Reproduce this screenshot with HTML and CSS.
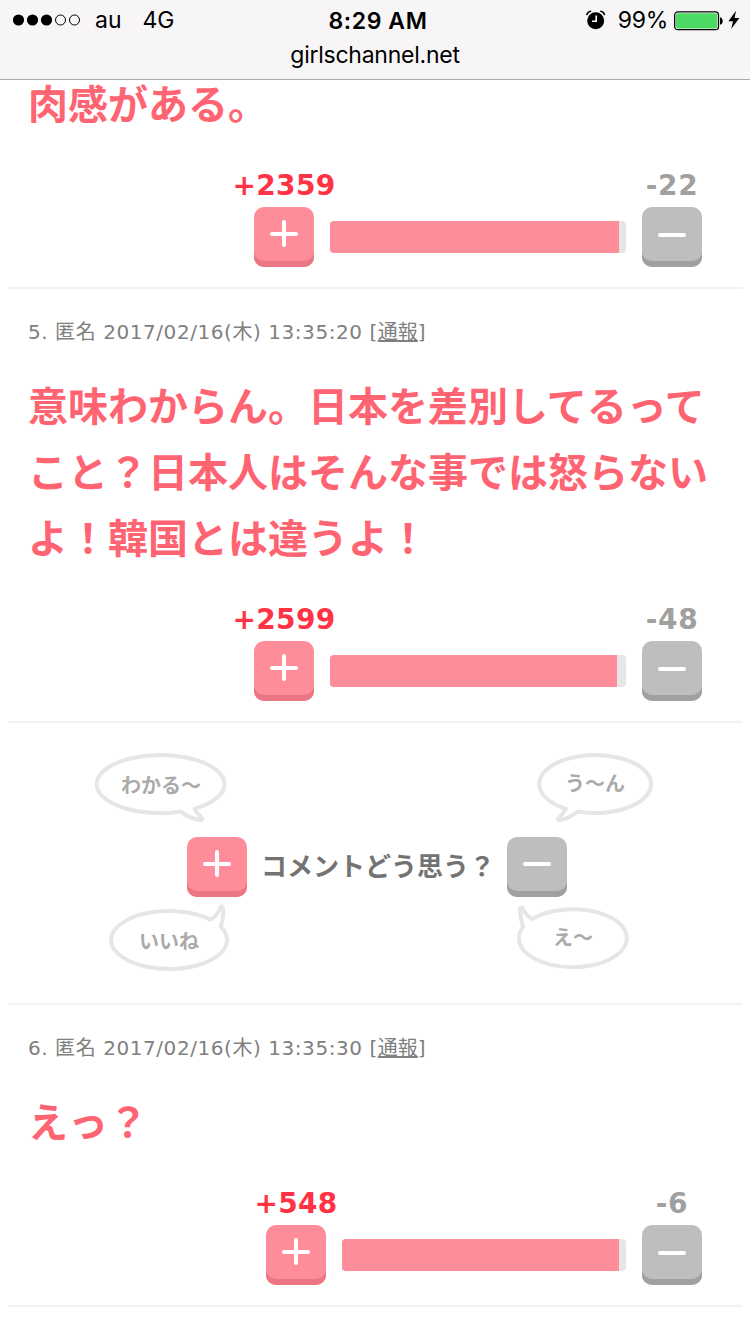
FILE: index.html
```html
<!DOCTYPE html>
<html lang="ja">
<head>
    <meta charset="UTF-8">
    <title>girlschannel.net</title>
    <link rel="stylesheet" href="styles.css">
</head>
<body>
  <div class="header">
    <div class="status">
      <div class="left">
        <svg class="signal" width="68" height="12" viewBox="0 0 68 12">
          <circle cx="5.5" cy="6" r="5.6"/>
          <circle cx="19.5" cy="6" r="5.6"/>
          <circle cx="33.5" cy="6" r="5.6"/>
          <circle class="off" cx="47.5" cy="6" r="5"/>
          <circle class="off" cx="61.5" cy="6" r="5"/>
        </svg>
        <span class="carrier">au</span>
        <span class="network">4G</span>
      </div>
      <div class="time">8:29 AM</div>
      <div class="right">
        <svg class="alarm" width="20" height="20" viewBox="0 0 20 20">
          <circle cx="9.7" cy="10.7" r="8.5"/>
          <path class="bell" d="M0.8 5.2C1.2 3 3 1.4 5.2 1.2M14.2 1.2C16.4 1.4 18.2 3 18.6 5.2"/>
          <path class="hand" d="M10.2 5.6V11.2H6"/>
        </svg>
        <span class="percent">99%</span>
        <svg class="battery" width="50" height="20" viewBox="0 0 50 20">
          <rect class="case" x="0.7" y="0.9" width="43.8" height="17.8" rx="3.2"/>
          <rect class="level" x="2" y="2.2" width="41.2" height="15.2" rx="1.8"/>
          <path d="M46 6.2C49.6 7 49.6 13 46 13.8Z"/>
        </svg>
        <svg class="bolt" width="12" height="20" viewBox="0 0 12 20">
          <path d="M8 0.8L0.4 11.2H5L3.2 19L11.4 8H6.6Z"/>
        </svg>
      </div>
    </div>
    <div class="url">girlschannel.net</div>
  </div>

  <ul class="list">
    <li class="item first">
      <div class="body">肉感がある。</div>
      <div class="vote">
        <div class="col">
          <span class="num plus-num">+2359</span>
          <div class="btn plus"><i></i></div>
        </div>
        <div class="bar"><div class="fill" style="width: 289px"></div></div>
        <div class="col">
          <span class="num minus-num">-22</span>
          <div class="btn minus"><i></i></div>
        </div>
      </div>
    </li>

    <li class="item">
      <div class="info">5. 匿名 2017/02/16(木) 13:35:20 [<a>通報</a>]</div>
      <div class="body">意味わからん。日本を差別してるって<br>こと？日本人はそんな事では怒らない<br>よ！韓国とは違うよ！</div>
      <div class="vote">
        <div class="col">
          <span class="num plus-num">+2599</span>
          <div class="btn plus"><i></i></div>
        </div>
        <div class="bar"><div class="fill" style="width: 287px"></div></div>
        <div class="col">
          <span class="num minus-num">-48</span>
          <div class="btn minus"><i></i></div>
        </div>
      </div>
    </li>

    <li class="guide">
      <div class="bubbles top">
        <svg class="bubble" width="132" height="70" viewBox="0 0 132 70">
          <path d="M99.5 55.7A64 29 0 1 0 86 58.6Q95 66 106 67Q108.500 67 106.500 64.800Q101.500 60 99.5 55.7Z"/>
          <text x="66" y="39.500">わかる〜</text>
        </svg>
        <svg class="bubble" width="116" height="70" viewBox="0 0 116 70">
          <path d="M29 55.8A56 29 0 1 1 40.700 58.6Q31 66 22.500 67Q19.500 67 22 64.800Q26.500 60 29 55.8Z"/>
          <text x="58" y="38">う〜ん</text>
        </svg>
      </div>
      <div class="ask">
        <div class="btn plus"><i></i></div>
        <span>コメントどう思う？</span>
        <div class="btn minus"><i></i></div>
      </div>
      <div class="bubbles bottom">
        <svg class="bubble" width="120" height="67" viewBox="0 0 120 67">
          <path d="M101.3 15.6A58 29 0 1 0 111.7 22.8Q115.500 10 113.800 3.500Q112.600 1 111.400 3.500Q108 12.500 101.3 15.6Z"/>
          <text x="60" y="44.500">いいね</text>
        </svg>
        <svg class="bubble" width="112" height="67" viewBox="0 0 112 67">
          <path d="M15.3 15A54 29 0 1 1 6 23Q2.500 10 3.200 4.500Q4.200 2 5.600 4.500Q10 12.500 15.3 15Z"/>
          <text x="56" y="41">え〜</text>
        </svg>
      </div>
    </li>

    <li class="item">
      <div class="info">6. 匿名 2017/02/16(木) 13:35:30 [<a>通報</a>]</div>
      <div class="body">えっ？</div>
      <div class="vote">
        <div class="col">
          <span class="num plus-num">+548</span>
          <div class="btn plus"><i></i></div>
        </div>
        <div class="bar short"><div class="fill" style="width: 277px"></div></div>
        <div class="col">
          <span class="num minus-num">-6</span>
          <div class="btn minus"><i></i></div>
        </div>
      </div>
    </li>
  </ul>
</body>
</html>
```

FILE: styles.css
```css
* {
  margin: 0;
  padding: 0;
  list-style: none;
  box-sizing: border-box;
}
body {
  width: 750px;
  height: 1334px;
  overflow: hidden;
  background-color: #fff;
  font-family: "DejaVu Sans", "Noto Sans CJK JP", sans-serif;
}

/* status bar */
.header {
  height: 80px;
  background-color: #f7f5f6;
  border-bottom: 1px solid #acaaab;
  font-family: Inter, sans-serif;
  color: #000;
}
.status {
  display: flex;
  height: 40px;
  font-size: 23px;
  line-height: 42px;
}
.left {
  display: flex;
  align-items: center;
  width: 328px;
  padding-left: 13px;
}
.carrier {
  margin-left: 14px;
}
.network {
  margin-left: 21px;
}
.off {
  fill: none;
  stroke: #000;
  stroke-width: 1;
}
.time {
  width: 100px;
  text-align: center;
  font-weight: 600;
  letter-spacing: 0.6px;
  white-space: nowrap;
}
.right {
  flex: 1;
  display: flex;
  align-items: center;
  justify-content: flex-end;
  padding-right: 10px;
}
.alarm {
  margin-right: 12px;
}
.bell,
.hand {
  fill: none;
  stroke: #000;
  stroke-width: 1.6;
}
.hand {
  stroke: #fff;
}
.percent {
  letter-spacing: -0.3px;
}
.battery {
  margin: 1px 0 0 6px;
}
.case {
  fill: #fff;
  stroke: #000;
  stroke-width: 1.3;
}
.level {
  fill: #4cd964;
}
.bolt {
  margin-left: 4px;
}
.url {
  height: 30px;
  line-height: 30px;
  text-align: center;
  font-size: 23px;
  letter-spacing: -0.25px;
}

/* comments */
.list {
  margin: 0 8px;
}
.item {
  padding: 24px 40px 20px 20px;
  border-bottom: 2px solid #f2f2f2;
}
.first {
  padding-top: 0;
}
.first .body {
  margin-top: -11px;
}
.info {
  height: 38px;
  margin-bottom: 20px;
  line-height: 38px;
  font-size: 20px;
  letter-spacing: 0.56px;
  color: #808080;
}
.info a {
  letter-spacing: 0;
  text-decoration: underline;
}
.body {
  font-family: "Noto Sans CJK JP", sans-serif;
  font-size: 40px;
  line-height: 66px;
  font-weight: bold;
  color: #ff6472;
  white-space: nowrap;
}
.vote {
  display: flex;
  justify-content: flex-end;
  padding-top: 32px;
}
.col {
  display: flex;
  flex-direction: column;
  align-items: center;
  width: 60px;
}
.num {
  height: 40px;
  line-height: 38px;
  font-size: 28px;
  font-weight: bold;
  white-space: nowrap;
}
.plus-num {
  letter-spacing: 0.3px;
  color: #ff3344;
}
.minus-num {
  letter-spacing: 0.7px;
  color: #a0a0a0;
}
.btn {
  display: flex;
  justify-content: center;
  width: 60px;
  height: 60px;
  padding-top: 26px;
  border-radius: 10px;
}
.plus {
  background-color: #ff8d99;
  box-shadow: inset 0 -6px 0 #eb7683;
}
.minus {
  background-color: #bebebe;
  box-shadow: inset 0 -6px 0 #a0a0a0;
}
.btn i {
  position: relative;
  width: 28px;
  height: 4px;
  border-radius: 2px;
  background-color: #fff;
}
.plus i {
  top: -1px;
}
.plus i:after {
  content: "";
  position: absolute;
  left: 12px;
  top: -12px;
  width: 4px;
  height: 27px;
  border-radius: 2px;
  background-color: #fff;
}
.ask .minus i {
  top: -1px;
}
.bar {
  width: 296px;
  height: 32px;
  margin: 54px 16px 0;
  border-radius: 4px;
  background-color: #e6e6e6;
  overflow: hidden;
}
.short {
  width: 284px;
}
.fill {
  height: 32px;
  background-color: #ff8d99;
}

/* plus / minus guide */
.guide {
  height: 282px;
  padding-top: 30px;
  border-bottom: 2px solid #f2f2f2;
  font-family: "Noto Sans CJK JP", sans-serif;
}
.bubbles {
  display: flex;
}
.top {
  gap: 310px;
  padding-left: 87px;
}
.bottom {
  gap: 288px;
  padding: 7px 0 0 101px;
}
.bubble path {
  fill: #fff;
  stroke: #e6e6e6;
  stroke-width: 4;
  stroke-linejoin: round;
}
.bubble text {
  font-size: 20px;
  font-weight: bold;
  text-anchor: middle;
  fill: #aaa;
}
.ask {
  display: flex;
  align-items: center;
  margin-top: 14px;
  padding-left: 179px;
}
.ask span {
  width: 260px;
  height: 60px;
  padding-left: 2px;
  text-align: center;
  line-height: 56px;
  font-size: 26px;
  font-weight: bold;
  color: #737373;
  white-space: nowrap;
}
```
